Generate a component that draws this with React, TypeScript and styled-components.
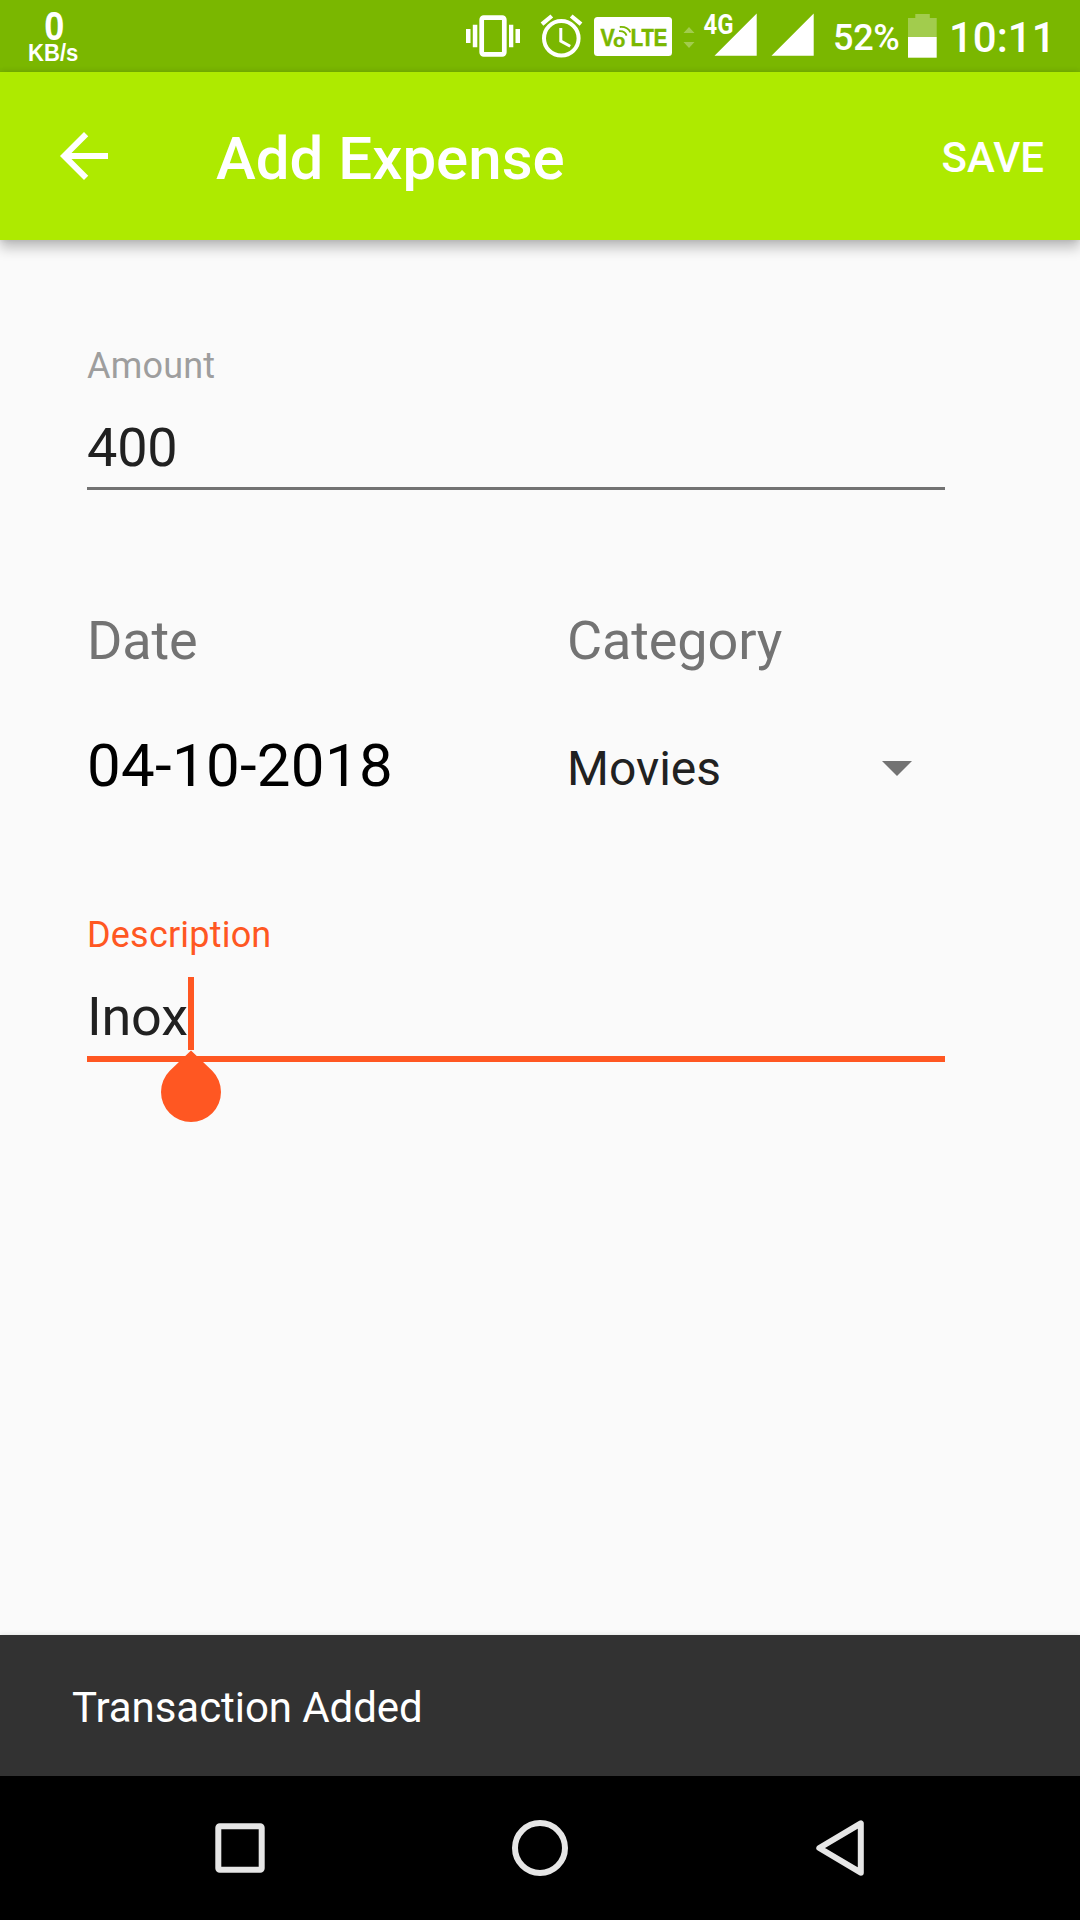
import React from "react";
import styled, { createGlobalStyle } from "styled-components";

const GlobalStyle = createGlobalStyle`
  *, *::before, *::after { box-sizing: border-box; }
  body { margin: 0; background: #fafafa; font-family: Roboto, "Liberation Sans", sans-serif; }
`;

const Screen = styled.div`
  width: 1080px;
  height: 1920px;
  display: flex;
  flex-direction: column;
  background: #fafafa;
  overflow: hidden;
`;

const StatusBar = styled.header`
  flex: none;
  height: 72px;
  display: flex;
  align-items: flex-start;
  background: #7ab700;
  color: #fff;
`;

const NetSpeed = styled.div`
  width: 107px;
  display: flex;
  flex-direction: column;
  align-items: center;
  padding-top: 6px;
  font-family: "Liberation Sans", Arial, sans-serif;
  font-weight: 700;
`;

const SpeedValue = styled.span`
  font-size: 41px;
  line-height: 40px;
  margin-left: 1px;
  transform: scaleX(0.88);
`;

const SpeedUnit = styled.span`
  font-size: 23px;
  line-height: 22px;
  margin-top: -4px;
  transform: scaleX(0.96);
`;

const StatusIcons = styled.svg`
  display: block;
  flex: none;
  margin-left: 353px;
`;

const BatteryLevel = styled.span`
  width: 75px;
  margin-left: 13px;
  font-size: 36px;
  font-weight: 500;
  letter-spacing: -0.3px;
  line-height: 42px;
  padding-top: 17px;
  white-space: nowrap;
`;

const BatteryIcon = styled.svg`
  display: block;
  flex: none;
  margin-top: 14px;
`;

const Clock = styled.time`
  margin-left: 12px;
  padding-top: 13px;
  font-size: 42px;
  font-weight: 500;
  line-height: 50px;
  white-space: nowrap;
`;

const AppBar = styled.nav`
  position: relative;
  flex: none;
  height: 168px;
  display: flex;
  align-items: center;
  padding: 0 36px 0 48px;
  background: #aeea00;
  color: #fff;
  box-shadow: 0 8px 12px rgba(0, 0, 0, 0.24), 0 0 6px rgba(0, 0, 0, 0.12);
`;

const IconButton = styled.button`
  display: flex;
  padding: 0;
  border: 0;
  background: none;
  color: inherit;
`;

const Title = styled.h1`
  flex: 1;
  margin: 5px 0 0 96px;
  font-size: 60px;
  font-weight: 500;
  line-height: 70px;
`;

const SaveButton = styled.button`
  padding: 0;
  border: 0;
  margin-top: 3px;
  background: none;
  color: inherit;
  font: 500 42px/50px Roboto, "Liberation Sans", sans-serif;
`;

const Form = styled.main`
  flex: 1;
  width: 858px;
  margin-left: 87px;
  display: flex;
  flex-direction: column;
`;

const Field = styled.div<{ $top: number; $active?: boolean }>`
  margin-top: ${(p) => p.$top}px;
  height: ${(p) => (p.$active ? 148 : 145)}px;
  display: flex;
  flex-direction: column;
  border-bottom: ${(p) => (p.$active ? "6px solid #ff5722" : "3px solid #727272")};
`;

const FieldLabel = styled.label<{ $active?: boolean }>`
  font-size: 36px;
  letter-spacing: 0.2px;
  line-height: 42px;
  color: ${(p) => (p.$active ? "#ff5722" : "#9e9e9e")};
`;

const FieldValue = styled.div`
  display: flex;
  margin-top: 29px;
  font-size: 54px;
  letter-spacing: -0.2px;
  line-height: 64px;
  color: #212121;
`;

const Caret = styled.span`
  position: relative;
  width: 6px;
  height: 73px;
  margin-top: -8px;
  background: #ff5722;
`;

const CaretHandle = styled.svg`
  position: absolute;
  left: -27px;
  top: 73px;
`;

const Pair = styled.section`
  display: grid;
  grid-template-columns: 480px 1fr;
  margin-top: 119px;
`;

const Column = styled.div`
  display: flex;
  flex-direction: column;
`;

const Heading = styled.h2`
  margin: 0;
  font-size: 54px;
  font-weight: 400;
  letter-spacing: -0.12px;
  line-height: 64px;
  color: #737373;
`;

const DateValue = styled.div`
  margin-top: 58px;
  font-size: 60px;
  letter-spacing: 0.3px;
  line-height: 70px;
  color: #000;
`;

const Select = styled.div`
  display: flex;
  justify-content: space-between;
  align-items: center;
  margin-top: 68px;
  padding-right: 33px;
  font-size: 48px;
  line-height: 56px;
  color: #212121;
`;

const DropArrow = styled.svg`
  margin-top: -1px;
  fill: #737373;
`;

const Snackbar = styled.div`
  flex: none;
  height: 141px;
  padding: 48px 72px 0;
  background: #323232;
  color: #fff;
  font-size: 42px;
  letter-spacing: -0.06px;
  line-height: 50px;
  box-shadow: 0 0 5px rgba(0, 30, 20, 0.12);
`;

const NavBar = styled.footer`
  flex: none;
  height: 144px;
  display: flex;
  justify-content: center;
  align-items: center;
  gap: 240px;
  background: #000;
`;

const NavKey = styled.svg`
  display: block;
  width: 60px;
  height: 60px;
  fill: none;
  stroke: #e6e6e6;
  stroke-width: 6;
  stroke-linejoin: round;
`;

export default function App() {
  return (
    <>
      <GlobalStyle />
      <Screen>
        <StatusBar>
          <NetSpeed>
            <SpeedValue>0</SpeedValue>
            <SpeedUnit>KB/s</SpeedUnit>
          </NetSpeed>
          <StatusIcons width="360" height="72" viewBox="460 0 360 72" fill="#fff">
            <rect x="481.7" y="17.7" width="22.6" height="36.6" rx="2" fill="none" stroke="#fff" strokeWidth="4.7" />
            <path d="M466 29h4.5v14H466zM472.8 24.7h4.5v22.6h-4.5zM509 24.7h4.3v22.6H509zM515.5 29h4.5v14h-4.5z" />
            <g fill="none" stroke="#fff">
              <circle cx="561.3" cy="38.3" r="17.3" strokeWidth="4" />
              <path d="M560.8 28v13l9.4 5.2" strokeWidth="3" />
              <path d="M542 24.2l9.8-8.2M581 24.2l-9.8-8.2" strokeWidth="4.2" />
            </g>
            <rect x="594" y="17" width="78" height="39" rx="3.5" />
            <g fill="#7ab700" fontFamily="Liberation Sans, Arial, sans-serif" fontWeight="700">
              <text x="600.6" y="46" fontSize="23" stroke="#7ab700" strokeWidth="0.5" textLength="14.2" lengthAdjust="spacingAndGlyphs">V</text>
              <text x="612.9" y="46.8" fontSize="19" stroke="#7ab700" strokeWidth="0.3" textLength="12.4" lengthAdjust="spacingAndGlyphs">o</text>
              <text x="630.8" y="46" fontSize="23" stroke="#7ab700" strokeWidth="0.7" textLength="36.4" lengthAdjust="spacingAndGlyphs">LTE</text>
            </g>
            <g fill="none" stroke="#7ab700" strokeWidth="1.8">
              <path d="M619 31.2q5.8-0.6 7.6 4.4" />
              <path d="M619.8 27q7.8-0.6 10.6 5.4" />
            </g>
            <path d="M683.5 33l5.5-6 5.5 6zM683.5 42h11l-5.5 6z" fillOpacity="0.3" />
            <path d="M714.5 55.7L756.7 13.5v42.2zM771.5 55.7l42.2-42.2v42.2z" />
            <text x="703.5" y="33.8" fontFamily="Roboto, sans-serif" fontWeight="700" fontSize="27" textLength="30" lengthAdjust="spacingAndGlyphs">4G</text>
          </StatusIcons>
          <BatteryLevel>52%</BatteryLevel>
          <BatteryIcon width="29" height="44" viewBox="0 0 29 44" fill="#fff">
            <path d="M7.3 0h14.5v4H28.7v19H0V4h7.3z" fillOpacity="0.3" />
            <path d="M0 23h28.7v20.7H0z" />
          </BatteryIcon>
          <Clock>10:11</Clock>
        </StatusBar>
        <AppBar>
          <IconButton aria-label="Back">
            <svg width="72" height="72" viewBox="0 0 24 24" fill="currentColor">
              <path d="M20 11H7.83l5.59-5.59L12 4l-8 8 8 8 1.41-1.41L7.83 13H20v-2z" />
            </svg>
          </IconButton>
          <Title>Add Expense</Title>
          <SaveButton>SAVE</SaveButton>
        </AppBar>
        <Form>
          <Field $top={105}>
            <FieldLabel>Amount</FieldLabel>
            <FieldValue>400</FieldValue>
          </Field>
          <Pair>
            <Column>
              <Heading>Date</Heading>
              <DateValue>04-10-2018</DateValue>
            </Column>
            <Column>
              <Heading>Category</Heading>
              <Select>
                Movies
                <DropArrow width="30" height="15" viewBox="0 0 30 15">
                  <path d="M0 0h30L15 15z" />
                </DropArrow>
              </Select>
            </Column>
          </Pair>
          <Field $top={113} $active>
            <FieldLabel $active>Description</FieldLabel>
            <FieldValue>
              Inox
              <Caret>
                <CaretHandle width="60" height="73" viewBox="0 0 60 73" fill="#ff5722">
                  <path d="M30 0.5L51.2 20.8A30 30 0 1 1 8.8 20.8z" />
                </CaretHandle>
              </Caret>
            </FieldValue>
          </Field>
        </Form>
        <Snackbar>Transaction Added</Snackbar>
        <NavBar>
          <NavKey viewBox="0 0 60 60">
            <rect x="8.3" y="8.3" width="43.4" height="43.4" rx="1.5" />
          </NavKey>
          <NavKey viewBox="0 0 60 60">
            <circle cx="30" cy="30" r="25" />
          </NavKey>
          <NavKey viewBox="0 0 60 60">
            <path d="M50.8 5.3v49.4L9.3 30z" />
          </NavKey>
        </NavBar>
      </Screen>
    </>
  );
}
